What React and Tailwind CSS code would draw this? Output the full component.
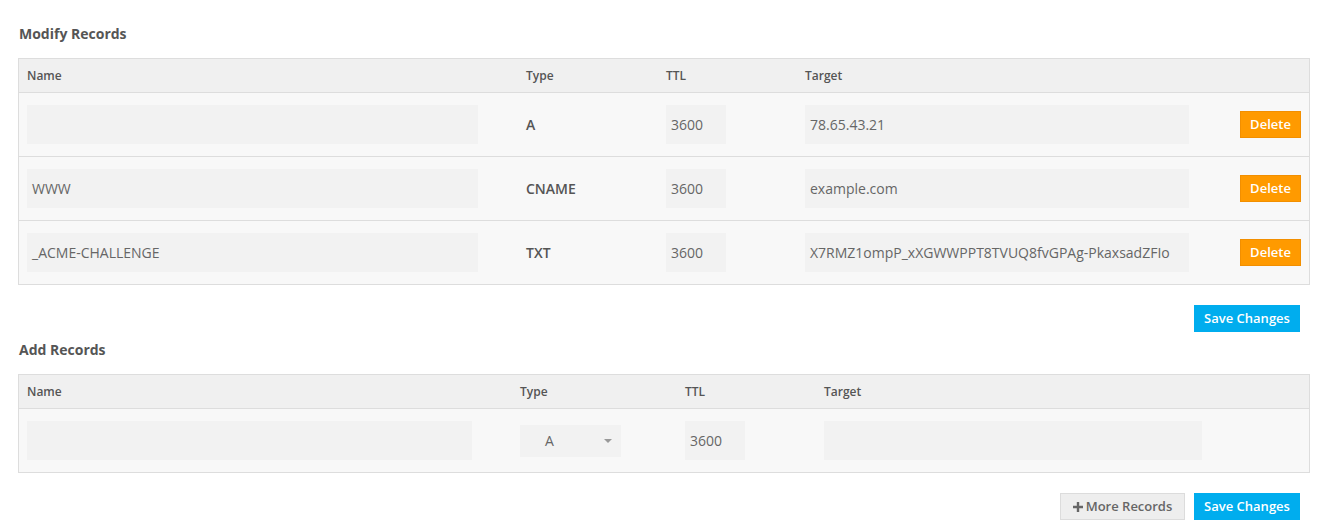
const records = [
  { name: '', type: 'A', ttl: '3600', target: '78.65.43.21' },
  { name: 'WWW', type: 'CNAME', ttl: '3600', target: 'example.com' },
  { name: '_ACME-CHALLENGE', type: 'TXT', ttl: '3600', target: 'X7RMZ1ompP_xXGWWPPT8TVUQ8fvGPAg-PkaxsadZFIo' },
];

const Field = ({ value, className }) => (
  <div className={`h-[39px] bg-[#f2f2f2] flex items-center px-[5px] text-[14px] text-[#666] ${className}`}>{value}</div>
);

const App = () => {
  return (
    <div className="w-[1332px] min-h-[531px] bg-white pt-[25px] pl-[18px] pr-[22px] font-['Open_Sans',sans-serif] text-[#666]">
      <h3 className="text-[14px] leading-[18px] font-bold text-[#555] pl-[1px]">Modify Records</h3>

      <div className="mt-[15px] border border-[#ddd]">
        <div className="grid grid-cols-[499px_140px_139px_434px_1fr] h-[34px] items-center bg-[#f0f0f0] border-b border-[#ddd] text-[12px] font-semibold text-[#555]">
          <div className="pl-[8px]">Name</div>
          <div className="pl-[8px]">Type</div>
          <div className="pl-[8px]">TTL</div>
          <div className="pl-[8px]">Target</div>
          <div></div>
        </div>
        {records.map((r, i) => (
          <div key={i} className={`grid grid-cols-[499px_140px_139px_434px_1fr] items-center bg-[#f8f8f8] ${i < records.length - 1 ? 'h-[64px] border-b border-[#ddd]' : 'h-[63px]'}`}>
            <div className="pl-[8px]"><Field value={r.name} className="w-[451px]" /></div>
            <div className="pl-[8px] text-[14px] font-semibold text-[#555]">{r.type}</div>
            <div className="pl-[8px]"><Field value={r.ttl} className="w-[60px]" /></div>
            <div className="pl-[8px]"><Field value={r.target} className="w-[384px]" /></div>
            <div className="flex justify-end pr-[8px]">
              <button className="w-[61px] h-[27px] bg-[#ff9a00] border border-[#f28f00] text-white text-[13px] font-semibold">Delete</button>
            </div>
          </div>
        ))}
      </div>

      <div className="flex justify-end mt-[20px] pr-[10px]">
        <button className="w-[106px] h-[27px] bg-[#00adee] text-white text-[13px] font-semibold">Save Changes</button>
      </div>

      <h3 className="mt-[9px] text-[14px] leading-[18px] font-bold text-[#555] pl-[1px]">Add Records</h3>

      <div className="mt-[15px] border border-[#ddd]">
        <div className="grid grid-cols-[493px_165px_139px_1fr] h-[34px] items-center bg-[#f0f0f0] border-b border-[#ddd] text-[12px] font-semibold text-[#555]">
          <div className="pl-[8px]">Name</div>
          <div className="pl-[8px]">Type</div>
          <div className="pl-[8px]">TTL</div>
          <div className="pl-[8px]">Target</div>
        </div>
        <div className="grid grid-cols-[493px_165px_139px_1fr] h-[63px] items-center bg-[#f8f8f8]">
          <div className="pl-[8px]"><Field value="" className="w-[445px]" /></div>
          <div className="pl-[8px]">
            <div className="w-[101px] h-[32px] bg-[#f2f2f2] flex items-center justify-between pl-[25px] pr-[9px] text-[14px] text-[#666]">
              <span>A</span>
              <span className="w-0 h-0 border-l-[4px] border-r-[4px] border-t-[4px] border-l-transparent border-r-transparent border-t-[#999]"></span>
            </div>
          </div>
          <div className="pl-[8px]"><Field value="3600" className="w-[60px]" /></div>
          <div className="pl-[8px]"><Field value="" className="w-[378px]" /></div>
        </div>
      </div>

      <div className="flex justify-end gap-[9px] mt-[20px] pr-[10px] pb-[10px]">
        <button className="w-[125px] h-[27px] bg-[#eeeeee] border border-[#dcdcdc] text-[#666] text-[13px] font-semibold flex items-center justify-center gap-[3px]">
          <svg width="10" height="10" viewBox="0 0 10 10"><path d="M3.8 0h2.4v3.8H10v2.4H6.2V10H3.8V6.2H0V3.8h3.8z" fill="#666" /></svg>
          More Records
        </button>
        <button className="w-[106px] h-[27px] bg-[#00adee] text-white text-[13px] font-semibold">Save Changes</button>
      </div>
    </div>
  );
};

export default App;
